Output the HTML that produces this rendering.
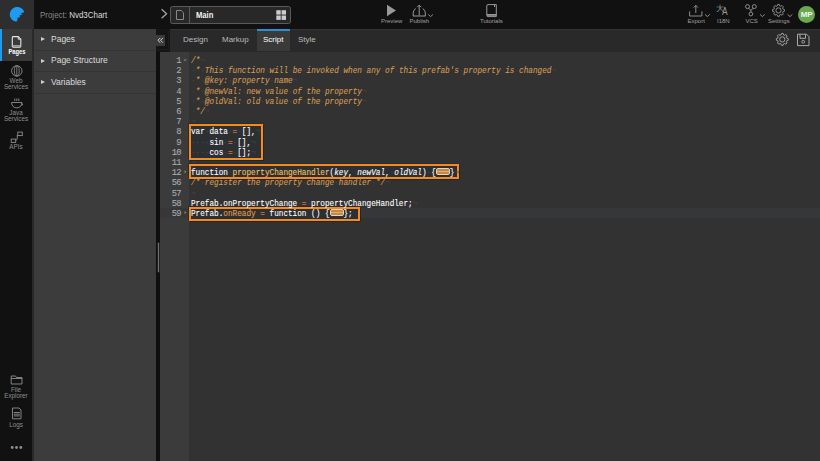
<!DOCTYPE html>
<html><head><meta charset="utf-8">
<style>
*{box-sizing:border-box;margin:0;padding:0}
html,body{width:820px;height:461px;overflow:hidden;background:#323232;font-family:"Liberation Sans",sans-serif}
.a{position:absolute}
svg{position:absolute;overflow:visible}
#top{left:0;top:0;width:820px;height:29px;background:#111}
#logo{left:0;top:0;width:34px;height:29px;background:#2e2e2e}
#lcol{left:0;top:29px;width:32px;height:432px;background:#111}
#lstrip{left:32px;top:29px;width:2px;height:432px;background:#2a2a2a}
#act{left:0;top:29px;width:32px;height:32px;background:#3a3a3a;border-left:2px solid #1e9bf0}
#panel{left:34px;top:29px;width:122px;height:432px;background:#3c3c3c}
.pi{position:absolute;left:0;width:122px;height:21.5px;border-bottom:1px solid #343434;color:#ddd;font-size:8.5px}
.pi span{position:absolute;left:17px;top:4.7px}
.pi i{position:absolute;left:6.5px;top:8.3px;width:0;height:0;border-left:4px solid #cfcfcf;border-top:2.2px solid transparent;border-bottom:2.2px solid transparent}
#split{left:156px;top:29px;width:4px;height:432px;background:#0f0f0f}
#handle{left:156.5px;top:241.5px;width:3px;height:31px;background:#6e6e6e;border-radius:1.5px;border:0.5px solid #222}
#tabdark{left:156px;top:29px;width:14px;height:23px;background:#151515}
#coll{left:156px;top:35px;width:9px;height:11px;background:#3a3a3a}
#tabs{left:170px;top:29px;width:650px;height:23px;background:#292929;border-top:1px solid #333}
.tab{position:absolute;top:29px;height:22px;font-size:8px;color:#bbb;line-height:22px}
#gutter{left:160px;top:52px;width:29px;height:410px;background:#3b3b3b}
#code{left:189px;top:52px;width:631px;height:410px;background:#323232}
#lines{left:160px;top:56px}
.ln{position:absolute;left:0;width:21px;text-align:right;font-family:"Liberation Mono",monospace;font-size:8.8px;letter-spacing:-0.6px;color:#a8abb0;-webkit-text-stroke:0.1px currentColor;height:10.2px;line-height:10.2px}
.cl{position:absolute;left:31px;font-family:"Liberation Mono",monospace;font-size:8.8px;color:#fff;white-space:pre;height:10.2px;line-height:10.2px;transform:scaleX(0.875);transform-origin:0 0;-webkit-text-stroke:0.1px currentColor}
.c{color:#d39b52;font-style:italic}
.k{color:#cc7833}
.f{color:#f3c264}
.p{font-style:italic}
.cl b{font-weight:normal;color:#474747;font-style:normal;-webkit-text-stroke:0}
.box{position:absolute;border:2px solid #f68a1f;box-shadow:1px 1px 0 #1f272d,-1px -1px 0 #2a2d30}
.fw{width:14.4px;height:7.2px;border:1px solid #e0d4c2;border-radius:2px;background:linear-gradient(#c98640 0,#c98640 35%,#dcae78 35%,#dcae78 65%,#c98640 65%)}
.bi{position:absolute;background:#2d3033}
.hl{font-size:6px;color:#a0a0a0;position:absolute;white-space:nowrap;line-height:6px}
.sl{font-size:6.3px;color:#8f8f8f;position:absolute;white-space:nowrap;line-height:6px;text-align:center;width:32px;left:0}
</style></head><body>
<div id="top" class="a"></div>
<div id="logo" class="a"></div>
<div id="lcol" class="a"></div>
<div id="lstrip" class="a"></div>
<div id="act" class="a"></div>
<div id="panel" class="a">
  <div class="pi" style="top:0"><i></i><span>Pages</span></div>
  <div class="pi" style="top:21.5px"><i></i><span>Page Structure</span></div>
  <div class="pi" style="top:43px"><i></i><span>Variables</span></div>
</div>
<div id="split" class="a"></div>
<div id="handle" class="a"></div>
<div id="tabdark" class="a"></div>
<div class="a" style="left:158px;top:31px;width:10.5px;height:19px;border-right:1px dotted #242424;border-bottom:1px dotted #242424"></div>
<div id="coll" class="a"></div>
<svg style="left:0;top:0" width="170" height="52"><path d="M160.3 37.9L157.9 40.3L160.3 42.7M162.9 37.9L160.5 40.3L162.9 42.7" fill="none" stroke="#d8d8d8" stroke-width="1"/></svg>
<div id="tabs" class="a"></div>
<div id="gutter" class="a"></div>
<div id="code" class="a"></div>

<!-- HEADER -->
<svg style="left:0;top:0" width="34" height="29"><path d="M16.5 21.8A7.45 7.45 0 1 1 24.3 12.2Q22.6 12.4 20.7 13.4Q21.8 13.9 22.2 15Q20.5 14.8 19.1 15.6Q19.9 16.2 20.1 17.2Q18.5 17.1 17.2 18Q17.8 18.6 17.7 19.4Q16.8 20.2 16.5 21.8Z" fill="#1e9bf0"/></svg>
<div class="a" style="left:39.8px;top:10.6px;font-size:8.6px;line-height:8.6px;color:#888;white-space:nowrap;transform:scaleX(0.925);transform-origin:0 0">Project: <span style="color:#ddd">Nvd3Chart</span></div>
<svg style="left:0;top:0" width="300" height="29">
 <path d="M161.6 9.2L166.6 13.8L161.6 18.3" fill="none" stroke="#aaa" stroke-width="1.2"/>
 <rect x="170.5" y="6.5" width="120" height="17" rx="2" fill="#282828" stroke="#5a5a5a" stroke-width="1"/>
 <line x1="189.5" y1="7" x2="189.5" y2="23" stroke="#5a5a5a" stroke-width="1"/>
 <path d="M176.5 10.5H181.2L183.5 12.8V19.5H176.5Z" fill="none" stroke="#888" stroke-width="1"/>
 <rect x="276.3" y="10.2" width="4.4" height="4.4" fill="#ccc"/><rect x="281.6" y="10.2" width="4.4" height="4.4" fill="#ccc"/>
 <rect x="276.3" y="15.5" width="4.4" height="4.4" fill="#ccc"/><rect x="281.6" y="15.5" width="4.4" height="4.4" fill="#ccc"/>
</svg>
<div class="a" style="left:195.5px;top:11.8px;font-size:8.2px;line-height:8.2px;color:#f4f4f4;font-weight:bold;transform:scaleX(0.93);transform-origin:0 0">Main</div>

<svg style="left:360px;top:0" width="460" height="29">
 <path d="M27 4.8L36 10.5L27 16.2Z" fill="#999"/>
 <path d="M53.2 16V12.8Q53.2 10 55.8 8.6M65.3 16V12.8Q65.3 10 62.7 8.6M53 16H65.5M59.2 15.5V5.2M57.2 7.2L59.2 5.2L61.2 7.2" fill="none" stroke="#999" stroke-width="1"/>
 <path d="M68.2 14.4L70.6 16.6L73 14.4" fill="none" stroke="#999" stroke-width="0.9"/>
 <path d="M126.8 5.8Q126.8 4.6 128 4.6H136.3V16.6H128Q126.8 16.6 126.8 15.4Z M126.8 14.6H136.3M134.5 4.8V7" fill="none" stroke="#999" stroke-width="1"/><path d="M127 15H136.3" stroke="#999" stroke-width="1.6"/>
 <path d="M329.6 11.3V16H341.9V11.3M335.8 13V5.4M333.6 7.6L335.8 5.4L338 7.6" fill="none" stroke="#999" stroke-width="0.9"/>
 <path d="M345 14.4L347.4 16.6L349.8 14.4" fill="none" stroke="#999" stroke-width="0.9"/>
 <path d="M400 14.4L402.4 16.6L404.8 14.4" fill="none" stroke="#999" stroke-width="0.9"/>
 <path d="M427.6 14.4L430 16.6L432.4 14.4" fill="none" stroke="#999" stroke-width="0.9"/>
 <circle cx="387.5" cy="6.6" r="2" fill="none" stroke="#999" stroke-width="0.9"/>
 <circle cx="394.3" cy="6.6" r="2" fill="none" stroke="#999" stroke-width="0.9"/>
 <circle cx="390.9" cy="14" r="1.9" fill="none" stroke="#999" stroke-width="0.9"/>
 <path d="M388.6 8.4L390.9 10.2L393.2 8.4M390.9 10.2V12.1" fill="none" stroke="#999" stroke-width="0.9"/>
</svg>
<div class="a" style="left:716.3px;top:4.6px;font-size:7.6px;line-height:8px;color:#999">大</div><div class="a" style="left:722px;top:6px;font-size:10.5px;line-height:10px;color:#999;transform:scaleX(0.8);transform-origin:0 0">A</div>
<div class="hl" style="left:381px;top:18px">Preview</div>
<div class="hl" style="left:409.5px;top:18px">Publish</div>
<div class="hl" style="left:480px;top:18px">Tutorials</div>
<div class="hl" style="left:687.5px;top:18px">Export</div>
<div class="hl" style="left:717px;top:18px">I18N</div>
<div class="hl" style="left:745.5px;top:18px">VCS</div>
<div class="hl" style="left:768px;top:18px">Settings</div>
<div class="a" style="left:798px;top:6.3px;width:17px;height:17px;border-radius:50%;background:#6aa84f;color:#f4f4f4;font-weight:bold;font-size:8px;line-height:17px;text-align:center;letter-spacing:-0.2px">MP</div>
<svg style="left:0;top:0" width="820" height="60">
 <g transform="translate(778.5 10.4)"><path d="M-1.35 -4.40 L-0.82 -5.94 L0.82 -5.94 L1.35 -4.40 L2.15 -4.07 L3.62 -4.78 L4.78 -3.62 L4.07 -2.15 L4.40 -1.35 L5.94 -0.82 L5.94 0.82 L4.40 1.35 L4.07 2.15 L4.78 3.62 L3.62 4.78 L2.15 4.07 L1.35 4.40 L0.82 5.94 L-0.82 5.94 L-1.35 4.40 L-2.15 4.07 L-3.62 4.78 L-4.78 3.62 L-4.07 2.15 L-4.40 1.35 L-5.94 0.82 L-5.94 -0.82 L-4.40 -1.35 L-4.07 -2.15 L-4.78 -3.62 L-3.62 -4.78 L-2.15 -4.07Z" fill="none" stroke="#999" stroke-width="0.9" stroke-linejoin="round"/><circle r="2.6" fill="none" stroke="#999" stroke-width="0.9"/></g>
 <g transform="translate(782.3 39.4)"><path d="M-1.35 -4.40 L-0.82 -5.94 L0.82 -5.94 L1.35 -4.40 L2.15 -4.07 L3.62 -4.78 L4.78 -3.62 L4.07 -2.15 L4.40 -1.35 L5.94 -0.82 L5.94 0.82 L4.40 1.35 L4.07 2.15 L4.78 3.62 L3.62 4.78 L2.15 4.07 L1.35 4.40 L0.82 5.94 L-0.82 5.94 L-1.35 4.40 L-2.15 4.07 L-3.62 4.78 L-4.78 3.62 L-4.07 2.15 L-4.40 1.35 L-5.94 0.82 L-5.94 -0.82 L-4.40 -1.35 L-4.07 -2.15 L-4.78 -3.62 L-3.62 -4.78 L-2.15 -4.07Z" fill="none" stroke="#aaa" stroke-width="0.9" stroke-linejoin="round"/><circle r="2.6" fill="none" stroke="#aaa" stroke-width="0.9"/></g>
 <path d="M797.5 34.2H806.5L809 36.7V45.6H797.5Z" fill="none" stroke="#aaa" stroke-width="1" stroke-linejoin="round"/>
 <path d="M800 34.2V38.3H805.5V34.2" fill="none" stroke="#aaa" stroke-width="1"/>
 <circle cx="803.2" cy="41.8" r="1.4" fill="none" stroke="#aaa" stroke-width="0.9"/>
</svg>

<!-- LEFT COLUMN -->
<svg style="left:0;top:0" width="34" height="461">
 <path d="M13.3 36.6H18.2L20.8 39.2V46.2Q20.8 47.1 19.9 47.1H13.2Q12.3 47.1 12.3 46.2V37.5Q12.3 36.6 13.3 36.6Z" fill="none" stroke="#e6e6e6" stroke-width="1.1"/><path d="M18.2 36.8V39.2H20.6" fill="none" stroke="#e6e6e6" stroke-width="0.9"/><path d="M12.6 45.6H20.5" stroke="#aaa" stroke-width="1"/>
 <circle cx="16.8" cy="70.9" r="5.2" fill="none" stroke="#8f8f8f" stroke-width="0.9"/>
 <ellipse cx="16.8" cy="70.9" rx="2.4" ry="5.2" fill="none" stroke="#8f8f8f" stroke-width="0.8"/><path d="M16.8 65.7V76.1" fill="none" stroke="#8f8f8f" stroke-width="0.8"/>
 <path d="M11.5 102.5H22Q21.5 107.8 16.8 107.8Q12 107.8 11.5 102.5ZM21.5 103.5Q23.5 103.8 22 105.5M14.8 98.5V101M16.8 98.5V101M18.8 98.5V101" fill="none" stroke="#8f8f8f" stroke-width="0.9"/>
 <rect x="11.2" y="139.1" width="4.5" height="3.3" fill="none" stroke="#8f8f8f" stroke-width="0.9"/>
 <rect x="17.8" y="132.1" width="4.5" height="3.5" fill="none" stroke="#8f8f8f" stroke-width="0.9"/>
 <path d="M15.7 140.5Q17.3 140 17.3 138V135" fill="none" stroke="#8f8f8f" stroke-width="0.9"/>
 <path d="M11.2 376H15.5L16.5 377.5H22V384H11.2Z M11.2 378.5H22" fill="none" stroke="#8f8f8f" stroke-width="0.9"/>
 <path d="M12.5 408H19L21 410V418.8H12.5Z M13.8 412.5H19.8M13.8 414.2H19.8M13.8 415.9H19.8" fill="none" stroke="#8f8f8f" stroke-width="0.9"/>
 <circle cx="12.2" cy="447.5" r="1.4" fill="#8f8f8f"/><circle cx="16.5" cy="447.5" r="1.4" fill="#8f8f8f"/><circle cx="20.8" cy="447.5" r="1.4" fill="#8f8f8f"/>
</svg>
<div class="sl" style="left:0.5px;top:48.6px;color:#fff;font-weight:bold;font-size:6.6px;line-height:6.6px;transform:scaleX(0.88)">Pages</div>
<div class="sl" style="top:77.5px">Web</div>
<div class="sl" style="top:83.5px">Services</div>
<div class="sl" style="top:109.5px">Java</div>
<div class="sl" style="top:115.5px">Services</div>
<div class="sl" style="top:144px">APIs</div>
<div class="sl" style="top:387px">File</div>
<div class="sl" style="top:393px">Explorer</div>
<div class="sl" style="top:421.5px">Logs</div>

<!-- TABS -->
<div class="tab" style="left:183px">Design</div>
<div class="tab" style="left:222px">Markup</div>
<div class="a" style="left:257px;top:29px;width:33px;height:22px;background:#3a3a3a;border-top:2px solid #1f93dd"></div>
<div class="tab" style="left:263px;color:#fff">Script</div>
<div class="tab" style="left:298px">Style</div>

<!-- CODE -->
<div class="a" style="left:160px;top:207.5px;width:29px;height:10.4px;background:#373737"></div>
<div class="a" style="left:189px;top:207.5px;width:631px;height:10.4px;background:#363739"></div>
<div class="bi" style="left:191px;top:126px;width:70px;height:32px"></div>
<div class="bi" style="left:191px;top:166px;width:266px;height:11px"></div>
<div class="bi" style="left:191px;top:209px;width:167px;height:10px"></div>
<div class="box" style="left:189px;top:124px;width:74px;height:36px"></div>
<div class="box" style="left:189px;top:164px;width:270px;height:15px"></div>
<div class="box" style="left:189px;top:207px;width:171px;height:14px"></div>
<div id="lines" class="a">
<div class="ln" style="top:0">1</div><div class="cl c" style="top:0">/*<b>¬</b></div>
<div class="ln" style="top:10.2px">2</div><div class="cl c" style="top:10.2px"><b>·</b>*<b>·</b>This<b>·</b>function<b>·</b>will<b>·</b>be<b>·</b>invoked<b>·</b>when<b>·</b>any<b>·</b>of<b>·</b>this<b>·</b>prefab's<b>·</b>property<b>·</b>is<b>·</b>changed<b>¬</b></div>
<div class="ln" style="top:20.4px">3</div><div class="cl c" style="top:20.4px"><b>·</b>*<b>·</b>@key:<b>·</b>property<b>·</b>name<b>¬</b></div>
<div class="ln" style="top:30.6px">4</div><div class="cl c" style="top:30.6px"><b>·</b>*<b>·</b>@newVal:<b>·</b>new<b>·</b>value<b>·</b>of<b>·</b>the<b>·</b>property<b>¬</b></div>
<div class="ln" style="top:40.8px">5</div><div class="cl c" style="top:40.8px"><b>·</b>*<b>·</b>@oldVal:<b>·</b>old<b>·</b>value<b>·</b>of<b>·</b>the<b>·</b>property<b>¬</b></div>
<div class="ln" style="top:51px">6</div><div class="cl c" style="top:51px"><b>·</b>*/<b>¬</b></div>
<div class="cl" style="top:61.2px"><b>¬</b></div><div class="ln" style="top:61.2px">7</div>
<div class="ln" style="top:71.4px">8</div><div class="cl" style="top:71.4px">var<b>·</b>data<b>·</b><span class="k">=</span><b>·</b>[],<b>¬</b></div>
<div class="ln" style="top:81.6px">9</div><div class="cl" style="top:81.6px"><b>·</b><b>·</b><b>·</b><b>·</b>sin<b>·</b><span class="k">=</span><b>·</b>[],<b>¬</b></div>
<div class="ln" style="top:91.8px">10</div><div class="cl" style="top:91.8px"><b>·</b><b>·</b><b>·</b><b>·</b>cos<b>·</b><span class="k">=</span><b>·</b>[];<b>¬</b></div>
<div class="cl" style="top:102px"><b>¬</b></div><div class="ln" style="top:102px">11</div>
<div class="ln" style="top:112.2px">12</div><div class="cl" style="top:112.2px">function<b>·</b><span class="f">propertyChangeHandler</span>(<span class="p">key</span>,<b>·</b><span class="p">newVal</span>,<b>·</b><span class="p">oldVal</span>)<b>·</b>{<b>·</b><b>·</b><b>·</b>}<b>¬</b></div>
<div class="ln" style="top:122.4px">56</div><div class="cl c" style="top:122.4px">/*<b>·</b>register<b>·</b>the<b>·</b>property<b>·</b>change<b>·</b>handler<b>·</b>*/<b>¬</b></div>
<div class="cl" style="top:132.6px"><b>¬</b></div><div class="ln" style="top:132.6px">57</div>
<div class="ln" style="top:142.8px">58</div><div class="cl" style="top:142.8px">Prefab.onPropertyChange<b>·</b><span class="k">=</span><b>·</b>propertyChangeHandler;<b>¬</b></div>
<div class="ln" style="top:153px">59</div><div class="cl" style="top:153px">Prefab.<span style="color:#e29d4c">onReady</span> <span class="k">=</span> function () {   };</div>
</div>
<svg style="left:0;top:0" width="820" height="461">
 <path d="M183.6 59.4L186.6 59.4L185.1 61.2Z" fill="#888"/>
 <path d="M184.6 170.2L186.4 171.8L184.6 173.4Z" fill="#888"/>
 <path d="M184.6 211L186.4 212.6L184.6 214.2Z" fill="#888"/>
</svg>
<div class="a fw" style="left:436px;top:168.2px"></div>
<div class="a fw" style="left:330px;top:209px"></div>
</body></html>
